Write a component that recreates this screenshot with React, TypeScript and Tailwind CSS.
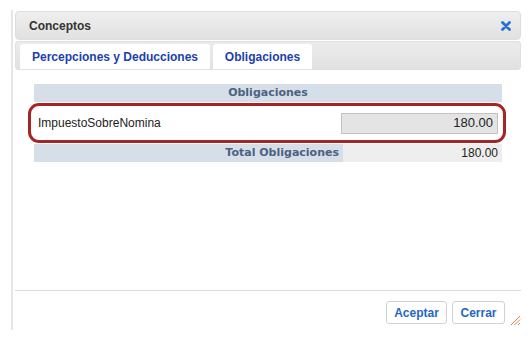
export default function App() {
  return (
    <div className="h-[339px] w-[532px] overflow-hidden bg-white pl-[11px] pt-[10px] font-['Liberation_Sans',Arial,sans-serif]">
      <div className="relative flex h-[320px] w-[510px] flex-col border-l-[2px] border-[#e6e6e6] pl-[2px]">
        {/* Title bar */}
        <div className="mt-[1px] flex h-[29px] items-center justify-between rounded-[4px] border border-[#dedede] bg-gradient-to-b from-[#efefef] to-[#e1e1e1] pl-[13px] pr-[9px]">
          <span className="text-[12px] font-bold text-[#333]">Conceptos</span>
          <svg width="10" height="10" viewBox="0 0 10 10" className="mt-[1px]">
            <path d="M1.5 1.5 L8.5 8.5 M8.5 1.5 L1.5 8.5" stroke="#2a6fd3" strokeWidth="2.8" strokeLinecap="round" />
          </svg>
        </div>

        {/* Tabs */}
        <div className="mt-[1px] flex h-[29px] items-end gap-[3px] rounded-[3px] border border-[#e0e0e0] bg-gradient-to-b from-[#ececec] to-[#e1e1e1] px-[4px]">
          <div className="flex h-[25px] w-[190px] items-center justify-center rounded-t-[3px] bg-white text-[12px] font-bold text-[#1d3fae]">
            Percepciones y Deducciones
          </div>
          <div className="flex h-[25px] w-[99px] items-center justify-center rounded-t-[3px] bg-white text-[12px] font-bold text-[#1d3fae]">
            Obligaciones
          </div>
        </div>

        {/* Table */}
        <div className="mx-[19px] mt-[14px] flex flex-col">
          <div className="flex h-[18px] items-center justify-center bg-[#d6dfe7] font-['DejaVu_Sans',Verdana,sans-serif] text-[11px] font-bold text-[#4b6284]">
            Obligaciones
          </div>
          <div className="flex h-[42px] items-center justify-between bg-white pl-[4px] pr-[4px]">
            <span className="text-[12px] text-[#222]">ImpuestoSobreNomina</span>
            <div className="flex h-[21px] w-[157px] items-center justify-end border border-[#c2c2c2] bg-[#e4e4e4] pr-[4px] text-[13px] text-[#222]">
              180.00
            </div>
          </div>
          <div className="flex h-[18px]">
            <div className="flex w-[309px] items-center justify-end bg-[#d6dfe7] pr-[4px] font-['DejaVu_Sans',Verdana,sans-serif] text-[11px] font-bold text-[#4b6284]">
              Total Obligaciones
            </div>
            <div className="flex flex-1 items-center justify-end bg-[#eeeeee] pr-[4px] text-[12px] text-[#222]">
              180.00
            </div>
          </div>
        </div>

        {/* Highlight annotation */}
        <div className="absolute left-[15px] top-[93px] h-[40px] w-[478px] rounded-[11px] border-[3px] border-[#a82424]" />

        <div className="flex-1" />

        {/* Footer */}
        <div className="h-[1px] w-[506px] bg-[#dcdcdc]" />
        <div className="flex h-[39px] w-[506px] items-start justify-end gap-[5px] pr-[16px] pt-[10px]">
          <button className="h-[23px] w-[61px] rounded-[3px] border border-[#d2d2d2] bg-white text-[12px] font-bold text-[#2766c6]">
            Aceptar
          </button>
          <button className="h-[23px] w-[53px] rounded-[3px] border border-[#d2d2d2] bg-white text-[12px] font-bold text-[#2766c6]">
            Cerrar
          </button>
        </div>

        {/* Resize grip */}
        <svg width="12" height="12" viewBox="0 0 12 12" className="absolute left-[496px] top-[304px]">
          <path d="M11 2 L2 11 M11 5.5 L5.5 11 M11 9 L9 11" stroke="#d9844a" strokeWidth="1" />
        </svg>
      </div>
    </div>
  );
}
